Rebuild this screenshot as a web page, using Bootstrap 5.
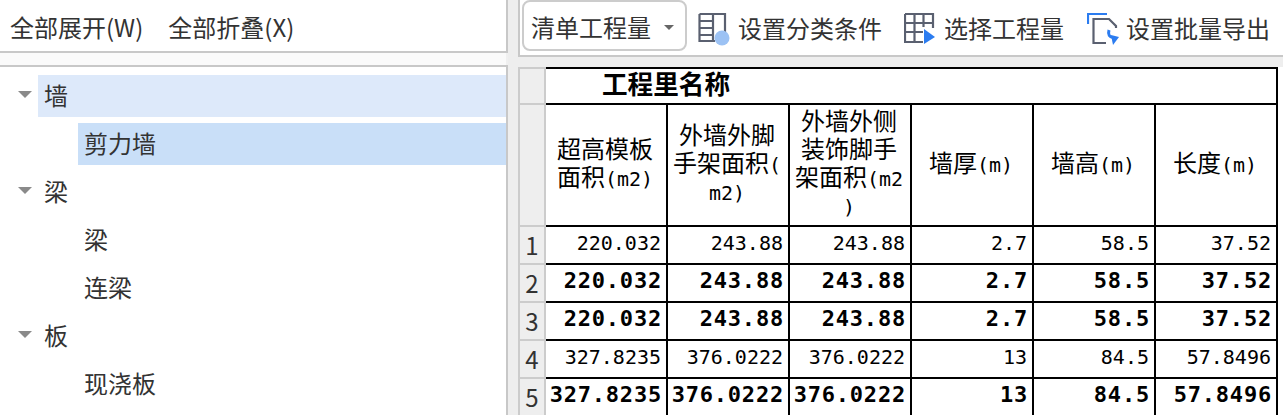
<!DOCTYPE html>
<html lang="zh">
<head>
<meta charset="utf-8">
<title>工程量</title>
<link href="https://cdn.jsdelivr.net/npm/bootstrap@5.3.0/dist/css/bootstrap.min.css" rel="stylesheet">
<style>
html,body{height:415px;overflow:hidden;background:#fff;}
body{font-family:"Noto Sans CJK SC","Liberation Sans",sans-serif;font-size:24px;color:#333;line-height:1.2;}
.leftpane{width:508px;flex:none;height:415px;}
.leftbar{height:53px;border-bottom:2px solid #c8c8c8;border-right:2px solid #c8c8c8;padding-left:10px;padding-top:4px;gap:25px;}
.leftgap{height:12px;background:#fafafa;border-right:2px solid #f0f0f0;}
.treebox{flex:1;border-top:2px solid #c8c8c8;border-right:2px solid #c8c8c8;padding-top:8px;}
.treerow{height:42px;margin-bottom:6px;}
.tarrow{width:38px;flex:none;padding-left:18px;padding-bottom:3px;}
.tarrow i{display:block;width:0;height:0;border-left:7px solid transparent;border-right:7px solid transparent;border-top:7px solid #8a8a8a;}
.tlabel{flex:1;height:42px;padding-left:6px;padding-bottom:2px;}
.tlabel.sel1{background:#dde9fa;}
.tlabel.sel2{background:#c9dff8;}
.tchild{margin-left:78px;}
.rightpane{flex:1;min-width:0;background:#eee;padding-left:10px;height:415px;}
.rightbar{height:57px;background:#fff;border-left:2px solid #c8c8c8;border-bottom:2px solid #c8c8c8;margin-bottom:10px;padding-left:2px;padding-bottom:4px;}
.qtysel{width:165px;height:51px;border:2px solid #ccc;border-radius:8px;padding-left:7px;padding-top:3px;margin-right:11px;background:#fff;}
.qtysel b{font-weight:400;flex:1;}
.qtycaret{width:0;height:0;border-left:5px solid transparent;border-right:5px solid transparent;border-top:5px solid #666;margin-right:11px;}
.toolitem{white-space:nowrap;margin-top:6px;}
.toolitem svg{flex:none;}
.tool1{width:206px;}
.tool2{width:183px;}
.tool3{width:184px;}
.sheetwrap{background:#fff;height:348px;overflow:hidden;}
table.sheet{border-collapse:separate;border-spacing:0;table-layout:fixed;width:760px;margin:0;color:#000;}
.sheet td,.sheet th{padding:0;font-weight:400;overflow:hidden;}
.sheet .rn{width:28px;background:#eee;border-right:2px solid #ccc;border-bottom:2px solid #ccc;border-left:2px solid #ccc;text-align:center;color:#333;font-size:24px;vertical-align:middle;}
.sheet .dc{width:122px;border-right:2px solid #000;border-bottom:2px solid #000;}
.sheet tr:first-child td,.sheet tr:first-child th{border-top:2px solid #000;}
.sheet tr:first-child .rn{border-top:2px solid #ccc;}
.sheet .ttl{height:38px;font-weight:700;font-size:25.6px;padding:0 0 6px 56px;line-height:28px;vertical-align:middle;text-align:left;border-right:2px solid #000;border-bottom:2px solid #000;}
.sheet .hd{height:122px;font-size:24px;line-height:28px;text-align:center;vertical-align:middle;white-space:nowrap;padding:0 2px 7px 0;}
.sheet .hd span{font-family:"DejaVu Sans Mono",monospace;font-size:20px;line-height:1;}
.sheet .num{height:38px;text-align:right;padding:0 5px 4px 0;font-family:"DejaVu Sans Mono",monospace;font-size:20px;line-height:24px;vertical-align:middle;}
.sheet .num.fat{font-weight:700;font-size:22px;letter-spacing:.8px;padding-right:4px;}
</style>
</head>
<body class="d-flex">
<div class="leftpane d-flex flex-column">
  <div class="leftbar d-flex align-items-center"><span>全部展开(W)</span><span>全部折叠(X)</span></div>
  <div class="leftgap"></div>
  <ul class="treebox list-unstyled mb-0">
    <li class="treerow d-flex align-items-center"><span class="tarrow"><i></i></span><span class="tlabel sel1 d-flex align-items-center">墙</span></li>
    <li class="treerow d-flex align-items-center tchild"><span class="tlabel sel2 d-flex align-items-center">剪力墙</span></li>
    <li class="treerow d-flex align-items-center"><span class="tarrow"><i></i></span><span class="tlabel d-flex align-items-center">梁</span></li>
    <li class="treerow d-flex align-items-center tchild"><span class="tlabel d-flex align-items-center">梁</span></li>
    <li class="treerow d-flex align-items-center tchild"><span class="tlabel d-flex align-items-center">连梁</span></li>
    <li class="treerow d-flex align-items-center"><span class="tarrow"><i></i></span><span class="tlabel d-flex align-items-center">板</span></li>
    <li class="treerow d-flex align-items-center tchild"><span class="tlabel d-flex align-items-center">现浇板</span></li>
  </ul>
</div>
<div class="rightpane d-flex flex-column">
  <div class="rightbar d-flex align-items-center">
    <div class="qtysel d-flex align-items-center"><b>清单工程量</b><span class="qtycaret"></span></div>
    <div class="toolitem tool1 d-flex align-items-center">
      <svg width="40" height="34" viewBox="0 0 40 34"><path d="M1.5 2H27V22M1.5 2V29H17M15 2V29M1.5 9H15M1.5 16H15M1.5 23H15" fill="none" stroke="#5a6070" stroke-width="2.2"/><circle cx="24" cy="26" r="7.5" fill="#9cc2f4"/></svg>
      <span>设置分类条件</span>
    </div>
    <div class="toolitem tool2 d-flex align-items-center">
      <svg width="40" height="34" viewBox="0 0 40 34"><path d="M1 2H29V16M1 2V30H19M1 11H29M1 20H19M10.5 2V30M19.5 2V15" fill="none" stroke="#5a6070" stroke-width="2.2"/><path d="M20 17L31 25L20 32Z" fill="#2b7cf0"/></svg>
      <span>选择工程量</span>
    </div>
    <div class="toolitem tool3 d-flex align-items-center">
      <svg width="39" height="34" viewBox="0 0 39 34"><path d="M1 12V2H20" fill="none" stroke="#2b7cf0" stroke-width="2.2"/><path d="M19 31H6.5V7H22L29 14V16" fill="none" stroke="#5a6070" stroke-width="2.2"/><path d="M22 18Q20 25 27 26" fill="none" stroke="#2b7cf0" stroke-width="3"/><path d="M24 23L32 25L26 33Z" fill="#2b7cf0"/></svg>
      <span>设置批量导出</span>
    </div>
  </div>
  <div class="sheetwrap">
    <table class="sheet">
      <tbody>
        <tr><td class="rn"></td><th class="ttl" colspan="6">工程里名称</th></tr>
        <tr><td class="rn"></td>
          <td class="dc hd">超高模板<br>面积<span>(m2)</span></td>
          <td class="dc hd">外墙外脚<br>手架面积<span>(</span><br><span>m2)</span></td>
          <td class="dc hd">外墙外侧<br>装饰脚手<br>架面积<span>(m2</span><br><span>)</span></td>
          <td class="dc hd">墙厚<span>(m)</span></td>
          <td class="dc hd">墙高<span>(m)</span></td>
          <td class="dc hd">长度<span>(m)</span></td>
        </tr>
        <tr><td class="rn">1</td><td class="dc num">220.032</td><td class="dc num">243.88</td><td class="dc num">243.88</td><td class="dc num">2.7</td><td class="dc num">58.5</td><td class="dc num">37.52</td></tr>
        <tr><td class="rn">2</td><td class="dc num fat">220.032</td><td class="dc num fat">243.88</td><td class="dc num fat">243.88</td><td class="dc num fat">2.7</td><td class="dc num fat">58.5</td><td class="dc num fat">37.52</td></tr>
        <tr><td class="rn">3</td><td class="dc num fat">220.032</td><td class="dc num fat">243.88</td><td class="dc num fat">243.88</td><td class="dc num fat">2.7</td><td class="dc num fat">58.5</td><td class="dc num fat">37.52</td></tr>
        <tr><td class="rn">4</td><td class="dc num">327.8235</td><td class="dc num">376.0222</td><td class="dc num">376.0222</td><td class="dc num">13</td><td class="dc num">84.5</td><td class="dc num">57.8496</td></tr>
        <tr><td class="rn">5</td><td class="dc num fat">327.8235</td><td class="dc num fat">376.0222</td><td class="dc num fat">376.0222</td><td class="dc num fat">13</td><td class="dc num fat">84.5</td><td class="dc num fat">57.8496</td></tr>
      </tbody>
    </table>
  </div>
</div>
</body>
</html>
